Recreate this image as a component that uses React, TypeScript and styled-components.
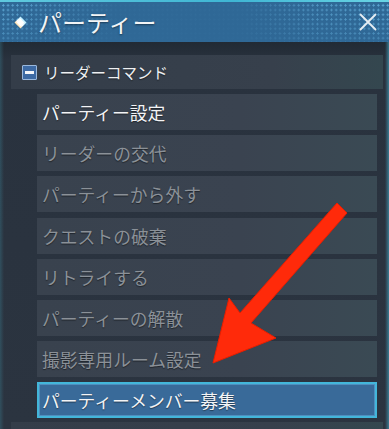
import styled, { createGlobalStyle } from 'styled-components';

const GlobalStyle = createGlobalStyle`
  html, body {
    margin: 0;
    padding: 0;
    background: #28323e;
  }
  body {
    font-family: 'Noto Sans CJK JP', 'Noto Sans', sans-serif;
  }
`;

const Window = styled.div`
  position: relative;
  width: 389px;
  height: 429px;
  overflow: hidden;
  display: flex;
  flex-direction: column;
  background:
    linear-gradient(90deg, rgba(60, 130, 150, 0.35) 0px, rgba(60, 130, 150, 0) 4px),
    linear-gradient(270deg, rgba(70, 170, 200, 0.6) 0px, rgba(60, 130, 150, 0) 4px),
    linear-gradient(180deg, #212a34 42px, #29323e 60px, #2b3440 100%);
`;

const TopLine = styled.div`
  height: 2px;
  flex-shrink: 0;
  background: linear-gradient(90deg, #5fc9de, #3fb6d4 60%, #6ad4e4);
`;

const TitleBar = styled.div`
  height: 40px;
  flex-shrink: 0;
  display: flex;
  align-items: center;
  padding: 0 14px;
  gap: 11px;
  background:
    linear-gradient(180deg, rgba(47, 104, 150, 0) 0px, rgba(47, 104, 150, 0.2) 20px, rgba(47, 104, 150, 0.55) 40px),
    linear-gradient(90deg, rgba(47, 104, 150, 0) 0%, rgba(47, 104, 150, 0.35) 12%, rgba(47, 104, 150, 0.95) 30%, rgba(47, 104, 150, 0.95) 62%, rgba(47, 104, 150, 0.3) 80%, rgba(47, 104, 150, 0) 100%),
    radial-gradient(circle, rgba(110, 190, 235, 0.75) 0.9px, transparent 1.2px) 1px 1px / 4.7px 4.7px,
    #2f6896;
`;

const Title = styled.h1`
  margin: 0;
  flex: 1;
  font-size: 24px;
  font-weight: 400;
  line-height: 1;
  color: #f2f4f6;
  text-shadow: 0 1px 2px rgba(0, 0, 0, 0.45);
`;

const CloseButton = styled.button`
  width: 20px;
  height: 20px;
  padding: 0;
  margin-right: -3px;
  border: none;
  background: none;
  display: flex;
  align-items: center;
  justify-content: center;
`;

const Body = styled.div`
  flex: 1;
  min-height: 0;
  display: flex;
  flex-direction: column;
  gap: 4px;
  padding: 13px 6px 0 11px;
`;

const SectionHeader = styled.div`
  height: 34px;
  flex-shrink: 0;
  display: flex;
  align-items: center;
  gap: 7px;
  padding-left: 11px;
  background: linear-gradient(90deg, #343d49, #37404c 70%, #34474f);
  color: #eef0f2;
  font-size: 15.5px;
  text-shadow: 0 1px 1px rgba(0, 0, 0, 0.5);
`;

const Toggle = styled.span`
  width: 13px;
  height: 13px;
  border: 1px solid #9ab8dc;
  border-radius: 1px;
  background: #3d6aa4;
  display: flex;
  align-items: center;
  justify-content: center;
  &::after {
    content: '';
    width: 9px;
    height: 3px;
    background: #f4f6fa;
  }
`;

const ItemList = styled.ul`
  list-style: none;
  flex-shrink: 0;
  margin: 1px 6px 0 26px;
  padding: 0;
  display: flex;
  flex-direction: column;
  gap: 5.2px;
`;

type ItemState = 'active' | 'disabled' | 'selected';

const Item = styled.li<{ $state: ItemState }>`
  height: 36px;
  flex-shrink: 0;
  box-sizing: border-box;
  display: flex;
  align-items: center;
  padding-left: ${(p) => (p.$state === 'selected' ? '3px' : '5px')};
  font-size: 17.8px;
  color: ${(p) => (p.$state === 'disabled' ? '#8b9198' : '#f3f4f6')};
  text-shadow: 0 1px 1px rgba(0, 0, 0, 0.45);
  background: ${(p) =>
    p.$state === 'selected'
      ? '#396a99'
      : 'linear-gradient(90deg, #39424e, #3a4350 60%, #3a4a54)'};
  border: ${(p) => (p.$state === 'selected' ? '2px solid #43b6da' : 'none')};
  box-shadow: ${(p) => (p.$state === 'selected' ? 'inset 0 0 0 1px #4f8fbf' : 'none')};
`;

const Arrow = styled.svg`
  position: absolute;
  left: 0;
  top: 0;
  pointer-events: none;
`;

const items: { label: string; state: ItemState }[] = [
  { label: 'パーティー設定', state: 'active' },
  { label: 'リーダーの交代', state: 'disabled' },
  { label: 'パーティーから外す', state: 'disabled' },
  { label: 'クエストの破棄', state: 'disabled' },
  { label: 'リトライする', state: 'disabled' },
  { label: 'パーティーの解散', state: 'disabled' },
  { label: '撮影専用ルーム設定', state: 'disabled' },
  { label: 'パーティーメンバー募集', state: 'selected' },
];

export default function App() {
  return (
    <>
      <GlobalStyle />
      <Window>
        <TopLine />
        <TitleBar>
          <svg width='13' height='13' viewBox='0 0 13 13'>
            <defs>
              <linearGradient id='dia' x1='0' y1='1' x2='1' y2='0'>
                <stop offset='0' stopColor='#ffb640' />
                <stop offset='0.45' stopColor='#ffffff' />
                <stop offset='1' stopColor='#7fe0ff' />
              </linearGradient>
            </defs>
            <polygon points='6.5,0.5 12.5,6.5 6.5,12.5 0.5,6.5' fill='url(#dia)' />
            <polygon points='6.5,2.8 10.2,6.5 6.5,10.2 2.8,6.5' fill='#ffffff' />
          </svg>
          <Title>パーティー</Title>
          <CloseButton aria-label='close'>
            <svg width='18' height='18' viewBox='0 0 18 18'>
              <path d='M1.5 1.5 L16.5 16.5 M16.5 1.5 L1.5 16.5' stroke='#e6edf3' strokeWidth='1.8' strokeLinecap='round' />
            </svg>
          </CloseButton>
        </TitleBar>
        <Body>
          <SectionHeader>
            <Toggle />
            リーダーコマンド
          </SectionHeader>
          <ItemList>
            {items.map((it) => (
              <Item key={it.label} $state={it.state}>
                {it.label}
              </Item>
            ))}
          </ItemList>
          <SectionHeader />
        </Body>
        <Arrow width='389' height='429' viewBox='0 0 389 429'>
          <polygon
            points='337,203 240,313 229,298 213,363 276,338 251,323 347,213'
            fill='#ff2a0a'
            stroke='#e81e00'
            strokeWidth='1'
            strokeLinejoin='round'
          />
        </Arrow>
      </Window>
    </>
  );
}
